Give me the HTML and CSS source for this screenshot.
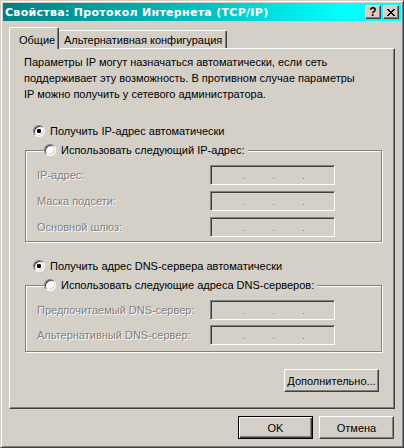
FILE: index.html
```html
<!DOCTYPE html>
<html lang="ru">
<head>
<meta charset="utf-8">
<link rel="stylesheet" href="styles.css">
</head>
<body>
<div class="window">
  <div class="titlebar">
    <span class="title">Свойства: Протокол Интернета (TCP/IP)</span>
    <div class="tbtns">
      <span class="tbtn help">?</span>
      <span class="tbtn close"><svg width="8" height="7" viewBox="0 0 8 7"><path d="M0 0h2v1h-2zM6 0h2v1h-2zM1 1h2v1h-2zM5 1h2v1h-2zM2 2h4v1h-4zM3 3h2v1h-2zM2 4h4v1h-4zM1 5h2v1h-2zM5 5h2v1h-2zM0 6h2v1h-2zM6 6h2v1h-2z" fill="#000"/></svg></span>
    </div>
  </div>
  <div class="body">
    <div class="tabs">
      <div class="tab active">Общие</div>
      <div class="tab">Альтернативная конфигурация</div>
    </div>
    <div class="panel">
      <p class="intro">Параметры IP могут назначаться автоматически, если сеть<br>поддерживает эту возможность. В противном случае параметры<br>IP можно получить у сетевого администратора.</p>
      <div class="opt first"><span class="radio checked"></span><span>Получить IP-адрес автоматически</span></div>
      <fieldset class="group g1">
        <legend><span class="radio"></span><span>Использовать следующий IP-адрес:</span></legend>
        <div class="row"><span class="lbl">IP-адрес:</span><span class="ipbox"><i></i><i></i><i></i></span></div>
        <div class="row"><span class="lbl">Маска подсети:</span><span class="ipbox"><i></i><i></i><i></i></span></div>
        <div class="row"><span class="lbl">Основной шлюз:</span><span class="ipbox"><i></i><i></i><i></i></span></div>
      </fieldset>
      <div class="opt second"><span class="radio checked"></span><span>Получить адрес DNS-сервера автоматически</span></div>
      <fieldset class="group g2">
        <legend><span class="radio"></span><span>Использовать следующие адреса DNS-серверов:</span></legend>
        <div class="row"><span class="lbl">Предпочитаемый DNS-сервер:</span><span class="ipbox"><i></i><i></i><i></i></span></div>
        <div class="row"><span class="lbl">Альтернативный DNS-сервер:</span><span class="ipbox"><i></i><i></i><i></i></span></div>
      </fieldset>
      <div class="advrow"><span class="btn adv">Дополнительно...</span></div>
    </div>
    <div class="footer">
      <span class="btn default">OK</span>
      <span class="btn">Отмена</span>
    </div>
  </div>
</div>
</body>
</html>
```
FILE: styles.css
```css
html, body {
  margin: 0;
  padding: 0;
  background: #d4d0c8;
}
body {
  font-family: "Liberation Sans", Arial, sans-serif;
  font-size: 11px;
  color: #000;
}
.window {
  width: 404px;
  height: 448px;
  box-sizing: border-box;
  background: #d4d0c8;
  border: 1px solid;
  border-color: #d4d0c8 #404040 #404040 #d4d0c8;
  box-shadow: inset 1px 1px #fff, inset -1px -1px #808080;
  padding: 2px;
  display: flex;
  flex-direction: column;
}
.titlebar {
  height: 18px;
  flex: none;
  display: flex;
  align-items: center;
  justify-content: space-between;
  background: linear-gradient(to right, #008080 0%, #00c8c8 55%, #00ffff 85%, #00ffff 100%);
  padding: 0 2px 0 2px;
}
.title {
  color: #fff;
  font-weight: bold;
  font-family: "DejaVu Sans", Verdana, sans-serif;
  font-size: 11px;
  letter-spacing: 0.3px;
}
.tbtns {
  display: flex;
  gap: 2px;
}
.tbtn {
  width: 16px;
  height: 14px;
  box-sizing: border-box;
  background: #d4d0c8;
  border: 1px solid;
  border-color: #fff #404040 #404040 #fff;
  box-shadow: inset -1px -1px #808080;
  display: flex;
  align-items: center;
  justify-content: center;
}
.help {
  font-family: "Liberation Sans", Arial, sans-serif;
  font-weight: bold;
  font-size: 12px;
  line-height: 12px;
}
.close svg {
  display: block;
  margin-left: -1px;
}
.body {
  flex: 1;
  display: flex;
  flex-direction: column;
  padding: 6px 6px 6px 6px;
}
.tabs {
  display: flex;
  align-items: flex-end;
  height: 21px;
  flex: none;
}
.tab {
  box-sizing: border-box;
  height: 18px;
  padding: 0 3px 0 5px;
  border-top: 1px solid #fff;
  border-left: 1px solid #fff;
  border-right: 1px solid #404040;
  box-shadow: inset -1px 0 #808080;
  border-radius: 2px 2px 0 0;
  display: flex;
  align-items: center;
  white-space: nowrap;
}
.tab.active {
  height: 22px;
  margin-bottom: -1px;
  padding: 2px 5px 0 9px;
  width: 50px;
  background: #d4d0c8;
  position: relative;
  z-index: 2;
  margin-right: -1px;
}
.tab:not(.active) {
  width: 169px;
  padding-top: 1px;
}
.panel {
  flex: none;
  height: 361px;
  box-sizing: border-box;
  border: 1px solid;
  border-color: #fff #404040 #404040 #fff;
  box-shadow: inset -1px -1px #808080;
  padding: 5px 12px 0 14px;
  display: flex;
  flex-direction: column;
}
.intro {
  margin: 0;
  line-height: 16px;
}
.opt {
  display: flex;
  align-items: center;
  gap: 5px;
  height: 16px;
  margin-left: 9px;
}
.opt.first { margin-top: 21px; }
.opt.second { margin-top: 16px; }
.radio {
  flex: none;
  width: 12px;
  height: 12px;
  box-sizing: border-box;
  border-radius: 50%;
  border: 1px solid;
  border-color: #808080 #fff #fff #808080;
  box-shadow: inset 1px 1px #404040, inset -1px -1px #d4d0c8;
  background: #fff;
}
.radio.checked {
  background: radial-gradient(circle at 50% 50%, #000 0, #000 2px, #fff 2.4px);
}
.group {
  margin: 3px 0 0 1px;
  padding: 0 0 0 11px;
  border: 1px solid #808080;
  box-shadow: 1px 1px 0 #fff, inset 1px 1px 0 #fff;
  min-width: 0;
}
.group legend {
  display: flex;
  align-items: center;
  gap: 5px;
  padding: 0 3px 0 0;
  margin-left: 7px;
  height: 16px;
  background: #d4d0c8;
}
.g1 { height: 100px; box-sizing: border-box; }
.g2 { height: 75px; box-sizing: border-box; }
.row {
  display: flex;
  align-items: center;
  justify-content: space-between;
  width: 298px;
  height: 20px;
  margin-top: 6px;
}
.g1 .row:first-of-type { margin-top: 7px; }
.g2 .row:first-of-type { margin-top: 7px; }
.g2 .row + .row { margin-top: 5px; }
.lbl {
  color: #808080;
  text-shadow: 1px 1px 0 #fff;
}
.ipbox {
  width: 125px;
  height: 20px;
  box-sizing: border-box;
  border: 1px solid;
  border-color: #808080 #fff #fff #808080;
  box-shadow: inset 1px 1px #404040, inset -1px -1px #d4d0c8;
  display: flex;
  justify-content: center;
  gap: 29px;
  padding: 12px 0 0 2px;
}
.ipbox i {
  display: block;
  width: 1px;
  height: 1px;
  background: #808080;
}
.advrow {
  display: flex;
  justify-content: flex-end;
  margin-top: 17px;
  padding-right: 3px;
}
.btn {
  box-sizing: border-box;
  height: 23px;
  background: #d4d0c8;
  border: 1px solid;
  border-color: #fff #404040 #404040 #fff;
  box-shadow: inset -1px -1px #808080;
  display: flex;
  align-items: center;
  justify-content: center;
  white-space: nowrap;
}
.btn.adv {
  width: 95px;
}
.footer {
  display: flex;
  justify-content: flex-end;
  gap: 6px;
  margin-top: 7px;
  padding-right: 1px;
}
.footer .btn {
  width: 75px;
}
.btn.default {
  border: 1px solid #000;
  box-shadow: inset 1px 1px #fff, inset -1px -1px #404040, inset -2px -2px #808080;
}
```
